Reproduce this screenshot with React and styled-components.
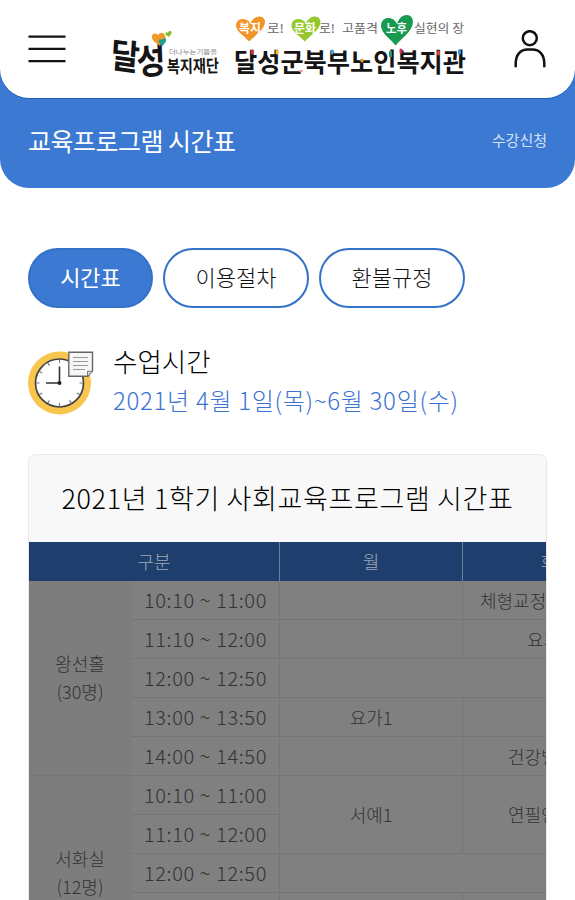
import styled, { createGlobalStyle } from "styled-components";

const GlobalStyle = createGlobalStyle`
  * {
    box-sizing: border-box;
  }

  body {
    margin: 0;
    background: #fff;
    font-family: "Noto Sans CJK KR", "Noto Sans", sans-serif;
    overflow: hidden;
  }
`;

const Page = styled.div`
  width: 575px;
  height: 900px;
  overflow: hidden;
  background: #fff;
`;

const Top = styled.div`
  height: 188px;
  background: #3c79d2;
  border-radius: 0 0 29px 29px;
`;

const Header = styled.header`
  display: flex;
  align-items: flex-start;
  justify-content: space-between;
  height: 98px;
  padding: 0 29px 0 28px;
  background: #fff;
  border-radius: 0 0 29px 29px;
  box-shadow: 0 1px 0 #1d5fb4;
`;

const IconButton = styled.button`
  display: block;
  margin: ${(props) => props.$top}px 0 0;
  padding: 0;
  border: none;
  background: none;
  line-height: 0;
`;

const LogoLink = styled.a`
  display: block;
  line-height: 0;
`;

const TitleBar = styled.div`
  display: flex;
  align-items: center;
  justify-content: space-between;
  height: 83px;
  padding: 0 28px;
  color: #fff;
`;

const PageTitle = styled.h1`
  margin: 0;
  font-size: 25px;
  font-weight: 400;
  letter-spacing: -0.5px;
`;

const ApplyLink = styled.a`
  font-size: 15px;
  color: #d3e1f7;
`;

const Content = styled.main`
  padding: 60px 28px 0;
`;

const Tabs = styled.div`
  display: flex;
  gap: 10px;
`;

const Tab = styled.button`
  width: ${(props) => props.$width}px;
  height: 60px;
  padding: 0 0 5px;
  border: 2px solid #3471c8;
  border-radius: 30px;
  background: ${(props) => (props.$active ? "#3c79d2" : "#fff")};
  color: ${(props) => (props.$active ? "#fff" : "#111")};
  font-family: inherit;
  font-size: 22px;
  font-weight: ${(props) => (props.$active ? 400 : 300)};
`;

const Period = styled.section`
  display: flex;
  gap: 19px;
  height: 66px;
  margin-top: 42px;
`;

const PeriodText = styled.div`
  display: flex;
  flex-direction: column;
  margin-top: -8px;
`;

const PeriodTitle = styled.h2`
  margin: 0;
  font-size: 26.5px;
  font-weight: 300;
  line-height: 38px;
  color: #000;
`;

const PeriodDate = styled.p`
  margin: 0;
  font-size: 24px;
  font-weight: 300;
  line-height: 40px;
  letter-spacing: 0.69px;
  white-space: nowrap;
  color: #3c73d2;
`;

const Card = styled.section`
  width: 519px;
  height: 500px;
  margin-top: 38px;
  border: 1px solid #e9e9e9;
  border-radius: 8px;
  background: #f8f8f8;
  overflow: hidden;
`;

const CardTitle = styled.h3`
  display: flex;
  align-items: center;
  justify-content: center;
  height: 87px;
  margin: 0;
  padding-bottom: 3px;
  font-size: 27px;
  font-weight: 300;
  letter-spacing: 0.65px;
  white-space: nowrap;
  color: #000;
`;

const Timetable = styled.div`
  display: grid;
  grid-template-columns: 103px 148px 183px 183px;
  grid-template-rows: repeat(11, 39px);
  width: 617px;
  background: #808080;
  color: #333;
  font-size: 18px;
  font-weight: 300;
`;

const Cell = styled.div`
  display: flex;
  align-items: center;
  justify-content: ${(props) => (props.$indent ? "flex-start" : "center")};
  grid-column: ${(props) => props.$col};
  grid-row: ${(props) => props.$row};
  padding-left: ${(props) => props.$indent || 0}px;
  padding-bottom: 1px;
  border-right: 1px solid #757575;
  border-bottom: 1px solid #757575;
  line-height: 28px;
  text-align: center;
  white-space: pre;
`;

const HeadCell = styled(Cell)`
  padding-bottom: 2px;
  border-right: 1px solid #718096;
  border-bottom: none;
  background: #1e3f6d;
  color: #a0a8b4;
`;

const RoomCell = styled(Cell)`
  padding-bottom: 2px;
  background: #7d7d7d;
  border-right-color: #7d7d7d;
`;

const TimeCell = styled(Cell)`
  font-size: 20px;
  letter-spacing: 0.6px;
`;

const times = [
  "10:10 ~ 11:00",
  "11:10 ~ 12:00",
  "12:00 ~ 12:50",
  "13:00 ~ 13:50",
  "14:00 ~ 14:50",
  "10:10 ~ 11:00",
  "11:10 ~ 12:00",
  "12:00 ~ 12:50",
  "13:00 ~ 13:50",
  "14:00 ~ 14:50",
];

const classes = [
  { col: "3", row: "2" },
  { col: "4", row: "2", name: "체형교정요가", indent: 17 },
  { col: "3", row: "3" },
  { col: "4", row: "3", name: "요가2", indent: 64 },
  { col: "3 / 5", row: "4" },
  { col: "3", row: "5", name: "요가1" },
  { col: "4", row: "5" },
  { col: "3", row: "6" },
  { col: "4", row: "6", name: "건강밸런스", indent: 45 },
  { col: "3", row: "7 / 9", name: "서예1" },
  { col: "4", row: "7 / 9", name: "연필인물화", indent: 45 },
  { col: "3 / 5", row: "9" },
  { col: "3", row: "10" },
  { col: "4", row: "10" },
];

const MenuIcon = () => (
  <svg width="38" height="30" viewBox="0 0 38 30" fill="none">
    <path d="M.5 2.6H37.5M.5 14.9H37.5M.5 27.1H37.5" stroke="#111" strokeWidth="2.3" />
  </svg>
);

const UserIcon = () => (
  <svg width="32" height="39" viewBox="0 0 32 39" fill="none" stroke="#111" strokeWidth="2.5">
    <circle cx="15.8" cy="8.2" r="7" />
    <path d="M1.7 37.2V33.5C1.7 24.5 6.8 19.4 13.5 19.4H18.5C25.2 19.4 30.3 24.5 30.3 33.5V37.2" />
  </svg>
);

const heart = "M0 5C-2-1-10-2-12 4C-14 12-5 17-1 23C3 17 14 10 12 1C10-5 2-3 0 5Z";

const Logo = () => (
  <svg
    width="360"
    height="86"
    viewBox="110 0 360 86"
    overflow="visible"
    fontFamily="'Noto Sans CJK KR', sans-serif"
  >
    {/* foundation mark */}
    <g fill="#151515" fontWeight="700">
      <text transform="translate(110 67) rotate(8) skewX(4)" fontSize="35" textLength="29" lengthAdjust="spacingAndGlyphs">
        달
      </text>
      <text transform="translate(137 75) rotate(-5) skewX(-3)" fontSize="36" textLength="29" lengthAdjust="spacingAndGlyphs">
        성
      </text>
      <text transform="translate(167 73) rotate(-1)" fontSize="17.5" textLength="52" lengthAdjust="spacingAndGlyphs">
        복지재단
      </text>
    </g>
    <text x="169" y="53.5" fontSize="6" fill="#888" textLength="48" lengthAdjust="spacingAndGlyphs">
      더나누는기쁨을
    </text>
    <path d="M158 35C155 32 151 34 152 38C153 42 157 43 160 46C162 42 167 40 165 35C163 32 159 33 158 35Z" fill="#f19a27" />
    <path d="M162 40C160 38 158 40 159 42C159 44 161 45 163 46C164 43 167 42 166 39C165 38 163 38 162 40Z" fill="#209c91" />
    <path d="M168 33C166 31 165 33 166 35L169 37C170 35 173 33 171 31C170 31 168 31 168 33Z" fill="#84b927" />

    {/* slogan */}
    <path d={heart} fill="#f39426" transform="translate(250.5 19) scale(1.18 .98)" />
    <path d={heart} fill="#94c82d" transform="translate(306 19) scale(1.18 .98)" />
    <path d={heart} fill="#189a51" transform="translate(397 18) scale(1.3 1.2)" />
    <g fill="#fff" fontSize="12" fontWeight="700">
      <text x="239" y="32.5" textLength="22" lengthAdjust="spacingAndGlyphs">복지</text>
      <text x="294" y="32.5" textLength="22" lengthAdjust="spacingAndGlyphs">문화</text>
      <text x="386" y="32.5" textLength="21" lengthAdjust="spacingAndGlyphs">노후</text>
    </g>
    <g fill="#666" fontSize="12">
      <text x="267" y="33" textLength="17" lengthAdjust="spacingAndGlyphs">로!</text>
      <text x="319" y="33" textLength="16" lengthAdjust="spacingAndGlyphs">로!</text>
      <text x="342" y="33" textLength="36" lengthAdjust="spacingAndGlyphs">고품격</text>
      <text x="414" y="33" textLength="50" lengthAdjust="spacingAndGlyphs">실현의 장</text>
    </g>

    {/* center name */}
    <text x="234" y="71.5" fontSize="26.5" fontWeight="700" fill="#151515" textLength="232" lengthAdjust="spacingAndGlyphs">
      달성군북부노인복지관
    </text>
    <g fill="none" strokeWidth="3" strokeLinecap="round">
      <path d="M252.5 51V53" stroke="#d63a45" />
      <path d="M277 51V53" stroke="#efb72b" />
      <path d="M332 51V53" stroke="#4e9bd5" />
      <path d="M362 60V61" stroke="#f29a2b" />
      <path d="M390.5 52V56" stroke="#27995c" />
      <path d="M401 50V52" stroke="#d02d65" />
      <path d="M438.5 52V54" stroke="#d94545" />
      <path d="M459.5 51V53" stroke="#4292d2" />
      <path d="M300 71H302" stroke="#ee9a9a" strokeWidth="2" />
    </g>
  </svg>
);

const ClockIcon = () => (
  <svg width="66" height="66" viewBox="0 0 66 66" fill="none">
    <circle cx="31.5" cy="33" r="31.5" fill="#f8c64e" />
    <circle cx="31.5" cy="33" r="24" fill="#fff" stroke="#444" strokeWidth="1.7" />
    <path
      d="M31.5 9.5V13M31.5 53V56.5M8 33H11.5M51.5 33H55M19.7 12.6L21.5 15.7M11.1 21.2L14.2 23M11.1 44.8L14.2 43M19.7 53.4L21.5 50.3M43.3 53.4L41.5 50.3M51.9 44.8L48.8 43"
      stroke="#777"
      strokeWidth="1.1"
    />
    <path d="M31.5 16.5V33H18" stroke="#333" strokeWidth="1.6" />
    <circle cx="31.5" cy="33" r="2" fill="#222" />
    <path d="M40.8 2.3H64.5V21L59.8 26.3H40.8Z" fill="#f6f6f6" stroke="#666" strokeWidth="1.4" />
    <path d="M59.5 26V21.3H64.3" fill="#ddd" stroke="#777" />
    <path d="M45 7.5H60M45 11.5H60M45 15.5H60M45 19.5H57" stroke="#999" strokeWidth="1.2" />
  </svg>
);

const App = () => {
  return (
    <Page>
      <GlobalStyle />
      <Top>
        <Header>
          <IconButton $top={34} aria-label="menu">
            <MenuIcon />
          </IconButton>
          <LogoLink>
            <Logo />
          </LogoLink>
          <IconButton $top={30} aria-label="user">
            <UserIcon />
          </IconButton>
        </Header>
        <TitleBar>
          <PageTitle>교육프로그램 시간표</PageTitle>
          <ApplyLink>수강신청</ApplyLink>
        </TitleBar>
      </Top>

      <Content>
        <Tabs>
          <Tab $active $width={125}>
            시간표
          </Tab>
          <Tab $width={146}>이용절차</Tab>
          <Tab $width={146}>환불규정</Tab>
        </Tabs>

        <Period>
          <ClockIcon />
          <PeriodText>
            <PeriodTitle>수업시간</PeriodTitle>
            <PeriodDate>2021년 4월 1일(목)~6월 30일(수)</PeriodDate>
          </PeriodText>
        </Period>

        <Card>
          <CardTitle>2021년 1학기 사회교육프로그램 시간표</CardTitle>
          <Timetable>
            <HeadCell $col="1 / 3" $row="1">
              구분
            </HeadCell>
            <HeadCell $col="3" $row="1">
              월
            </HeadCell>
            <HeadCell $col="4" $row="1" $indent={78}>
              화
            </HeadCell>
            <RoomCell $col="1" $row="2 / 7">
              {"왕선홀\n(30명)"}
            </RoomCell>
            <RoomCell $col="1" $row="7 / 12">
              {"서화실\n(12명)"}
            </RoomCell>
            {times.map((time, i) => (
              <TimeCell key={i} $col="2" $row={i + 2}>
                {time}
              </TimeCell>
            ))}
            {classes.map((item) => (
              <Cell
                key={item.col + item.row}
                $col={item.col}
                $row={item.row}
                $indent={item.indent}
              >
                {item.name}
              </Cell>
            ))}
          </Timetable>
        </Card>
      </Content>
    </Page>
  );
};

export default App;
